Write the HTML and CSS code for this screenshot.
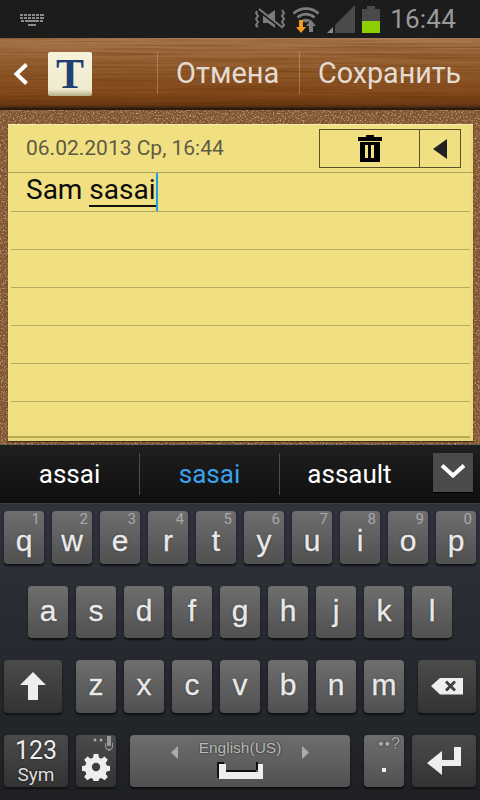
FILE: index.html
```html
<!DOCTYPE html>
<html lang="ru">
<head>
<meta charset="utf-8">
<title>Заметка</title>
<link rel="stylesheet" href="styles.css">
</head>
<body>
<svg class="defs" width="0" height="0" aria-hidden="true">
  <filter id="woodgrain" x="0" y="0" width="100%" height="100%">
    <feTurbulence type="fractalNoise" baseFrequency="0.006 0.45" numOctaves="3" seed="4"/>
    <feColorMatrix values="0 0 0 0 0.1  0 0 0 0 0.03  0 0 0 0 0  0.9 0 0 0 -0.34"/>
  </filter>
  <filter id="corkdark" x="0" y="0" width="100%" height="100%">
    <feTurbulence type="fractalNoise" baseFrequency="0.7" numOctaves="2" seed="9"/>
    <feColorMatrix values="0 0 0 0 0.2  0 0 0 0 0.1  0 0 0 0 0.03  2.2 0 0 0 -1.05"/>
  </filter>
  <filter id="corklight" x="0" y="0" width="100%" height="100%">
    <feTurbulence type="fractalNoise" baseFrequency="0.6" numOctaves="2" seed="21"/>
    <feColorMatrix values="0 0 0 0 0.72  0 0 0 0 0.52  0 0 0 0 0.34  2.2 0 0 0 -1.05"/>
  </filter>
</svg>
<div class="status">
  <svg class="st-kbd" width="26" height="14" viewBox="0 0 26 14"><path fill="#8a8a8a" d="M1 1h3v2H1zM5 1h3v2H5zM9 1h3v2H9zM13 1h3v2h-3zM17 1h3v2h-3zM21 1h4v2h-4zM1 4h3v2H1zM5 4h3v2H5zM9 4h3v2H9zM13 4h3v2h-3zM17 4h3v2h-3zM21 4h4v2h-4zM2 7h3v2H2zM6 7h14v2H6zM21 7h3v2h-3zM9 11h8v2H9z"/></svg>
  <div class="st-right">
    <svg width="32" height="22" viewBox="0 0 32 22"><path fill="#7c7c7c" d="M9 7h5l7-5v18l-7-5H9z"/><path fill="none" stroke="#7c7c7c" stroke-width="2" d="M4 2l-2 3 2 3-2 3 2 3-2 3 2 2M28 2l2 3-2 3 2 3-2 3 2 3-2 2"/><path stroke="#1c1c1c" stroke-width="3" d="M3 1l26 20"/><path stroke="#7c7c7c" stroke-width="2" d="M5 1l24 19"/></svg>
    <svg class="st-wifi" width="28" height="28" viewBox="0 0 28 28"><path fill="none" stroke="#7c7c7c" stroke-width="2.6" d="M1.500 8.500C8.500 2 19.500 2 26.500 8.500M5.500 12.500C10.500 8 17.500 8 22.500 12.500M9.500 16.500C12 14.500 16 14.500 18.500 16.500"/><path fill="#7c7c7c" d="M14 18l2-2h-4zM19 15l5 6h-3v6h-4v-6h-3z"/><path fill="#f39a1d" d="M7 15h4v7h3l-5 6-5-6h3z"/></svg>
    <svg width="28" height="28" viewBox="0 0 28 28"><path fill="#4a4a4a" d="M8 20L28 0v28H8z"/><path fill="#8a8a8a" d="M0 28l6-6v6z"/></svg>
    <svg width="18" height="28" viewBox="0 0 18 28"><path fill="#4a4a4a" d="M5 1h8v3h5v12H0V4h5z"/><path fill="#8ccf00" d="M0 16h18v12H0z"/></svg>
    <span class="clock">16:44</span>
  </div>
</div>
<header class="bar">
  <svg class="tex" width="480" height="72"><rect width="480" height="69" filter="url(#woodgrain)"/></svg>
  <svg class="back" width="16" height="24" viewBox="0 0 16 24"><path fill="none" stroke="#fff" stroke-width="4" d="M13.500 2.500L3.500 12l10 9.500"/></svg>
  <div class="app"><span class="app-t">T</span></div>
  <div class="act act-cancel">Отмена</div>
  <div class="act act-save">Сохранить</div>
</header>
<main class="cork">
  <svg class="tex" width="480" height="335"><rect width="480" height="335" filter="url(#corkdark)"/><rect width="480" height="335" filter="url(#corklight)"/></svg>
  <section class="note">
    <div class="note-head">
      <span class="date">06.02.2013 Ср, 16:44</span>
      <div class="tools">
        <div class="tool tool-del">
          <svg width="24" height="27" viewBox="0 0 24 27"><path d="M8 0h8v2h8v4H0V2h8zM2 7h20v20H2zM7 10v13h3V10zM13 10v13h3V10z" fill="#000" fill-rule="evenodd"/></svg>
        </div>
        <div class="tool tool-arrow"><svg width="14" height="20" viewBox="0 0 14 20"><path fill="#222" d="M14 0v20L0 10z"/></svg></div>
      </div>
    </div>
    <div class="line line-text"><span>Sam <u class="comp">sasai</u></span><i class="caret"></i></div>
    <div class="line"></div>
    <div class="line"></div>
    <div class="line"></div>
    <div class="line"></div>
    <div class="line"></div>
  </section>
</main>
<div class="sugg">
  <div class="sg sg-1">assai</div>
  <div class="sg sg-2 on">sasai</div>
  <div class="sg sg-3">assault</div>
  <div class="more"><svg width="28" height="16" viewBox="0 0 28 16"><path fill="none" stroke="#fff" stroke-width="4" d="M3 2.500l11 10 11-10"/></svg></div>
</div>
<div class="kb">
  <div class="row row-1">
    <div class="key"><sup class="num">1</sup>q</div>
    <div class="key"><sup class="num">2</sup>w</div>
    <div class="key"><sup class="num">3</sup>e</div>
    <div class="key"><sup class="num">4</sup>r</div>
    <div class="key"><sup class="num">5</sup>t</div>
    <div class="key"><sup class="num">6</sup>y</div>
    <div class="key"><sup class="num">7</sup>u</div>
    <div class="key"><sup class="num">8</sup>i</div>
    <div class="key"><sup class="num">9</sup>o</div>
    <div class="key"><sup class="num">0</sup>p</div>
  </div>
  <div class="row row-2">
    <div class="key">a</div><div class="key">s</div><div class="key">d</div><div class="key">f</div><div class="key">g</div><div class="key">h</div><div class="key">j</div><div class="key">k</div><div class="key">l</div>
  </div>
  <div class="row">
    <div class="key dark w58 after14"><svg width="26" height="28" viewBox="0 0 26 28"><path fill="#eee" d="M13 0l13 13h-8v15H8V13H0z"/></svg></div>
    <div class="key">z</div><div class="key">x</div><div class="key">c</div><div class="key">v</div><div class="key">b</div><div class="key">n</div><div class="key">m</div>
    <div class="key dark w58 before6"><svg width="32" height="17" viewBox="0 0 32 17"><path fill="#eee" fill-rule="evenodd" d="M9 0h23v16.500H9L0 8zM14 4.500l3.500 3.500-3.500 3.500 2 2 3.500-3.500 3.500 3.500 2-2-3.500-3.500 3.500-3.500-2-2-3.500 3.500-3.500-3.500z"/></svg></div>
  </div>
  <div class="row">
    <div class="key dark w64 sym"><span class="sym-a">123</span><span class="sym-b">Sym</span></div>
    <div class="key dark settings">
      <svg class="mic" width="20" height="16" viewBox="0 0 20 16"><circle cx="2" cy="4" r="1.500" fill="#aaa"/><circle cx="8" cy="4" r="1.500" fill="#aaa"/><path fill="#999" d="M14 0h4v10h-4zM12 7h1v3a3 3 0 0 0 6 0V7h1v3a4 4 0 0 1-3 4v1h-2v-1a4 4 0 0 1-3-4z"/></svg>
      <svg class="gear" width="28" height="28" viewBox="0 0 28 28"><path fill="#eee" fill-rule="evenodd" d="M11.500 0h5l.7 4 2.600 1.100 3.400-2.300 3.500 3.500-2.300 3.400 1.100 2.600 4 .7v5l-4 .7-1.100 2.600 2.300 3.400-3.500 3.500-3.400-2.300-2.600 1.100-.7 4h-5l-.7-4-2.600-1.100-3.400 2.300-3.500-3.500 2.300-3.400-1.100-2.600-4-.7v-5l4-.7 1.100-2.600-2.300-3.400 3.500-3.500 3.400 2.300 2.600-1.100zM14 9.500a4.500 4.500 0 1 0 0 9 4.500 4.500 0 0 0 0-9z" transform="translate(1 1) scale(.93)"/></svg>
    </div>
    <div class="key space">
      <svg class="arr-l" width="7" height="13" viewBox="0 0 7 13"><path fill="#aaa" d="M7 0v13L0 6.500z"/></svg>
      <span class="lang">English(US)</span>
      <svg class="arr-r" width="7" height="13" viewBox="0 0 7 13"><path fill="#aaa" d="M0 0v13l7-6.500z"/></svg>
      <svg class="spacebar" width="46" height="17" viewBox="0 0 46 17"><path fill="#111" d="M0 0h7v10h32V0h2v8H9V2H2v14H0z"/><path fill="#eee" d="M2 2h7v8h32V2h5v15H2z"/></svg>
    </div>
    <div class="key period"><span class="per-top">&#8226;&#8226;?</span><span class="per-dot"></span></div>
    <div class="key dark w64 enter"><svg width="34" height="29" viewBox="0 0 34 29"><path fill="#eee" d="M27 1h7v19H15v9L0 17 15 5v9h12z"/></svg></div>
  </div>
</div>
</body>
</html>
```
FILE: styles.css
```css
* { box-sizing: border-box; }
html, body { margin: 0; padding: 0; }
body {
  width: 480px;
  height: 800px;
  overflow: hidden;
  font-family: Roboto, "Noto Sans CJK SC", sans-serif;
  background: #1c1c1c;
  display: flex;
  flex-direction: column;
}
.defs { position: absolute; }
.tex { position: absolute; left: 0; top: 0; pointer-events: none; }

.status {
  height: 38px;
  background: #1c1c1c;
  display: flex;
  align-items: center;
  justify-content: space-between;
  padding: 0 24px 0 19px;
}
.st-kbd { margin-top: 1px; }
.st-right { display: flex; align-items: center; gap: 7px; }
.st-right svg { flex: none; }
.st-wifi { margin-left: -1px; }
.clock { font-size: 26px; color: #9a9a9a; margin-left: 3px; letter-spacing: .2px; line-height: 38px; }

.bar {
  position: relative;
  height: 72px;
  background: linear-gradient(#a97a50 0, #a06a40 18%, #8f5829 50%, #84491c 78%, #6b3a16 92%, #4a2a12 96%, #2a1a0e 98%, #2a1a0e 100%);
  display: flex;
  align-items: center;
}
.back { position: relative; margin-left: 13px; flex: none; }
.app {
  position: relative;
  width: 44px;
  height: 44px;
  margin-left: 19px;
  flex: none;
  border-radius: 2px;
  background: linear-gradient(#f7f3da, #f0ebcf 85%, #cdc7a4 94%, #b5ae8c);
  display: flex;
  align-items: center;
  justify-content: center;
}
.app-t {
  font-family: "Liberation Serif", serif;
  font-weight: 700;
  font-size: 42px;
  line-height: 44px;
  color: #1f4072;
}
.act {
  position: relative;
  height: 42px;
  margin-top: -2px;
  display: flex;
  align-items: center;
  font-size: 29px;
  color: #e4dcd2;
  border-left: 1px solid rgba(240, 215, 190, .3);
  flex: none;
}
.act-cancel { margin-left: 65px; width: 142px; padding-left: 18px; }
.act-save { padding-left: 18px; font-size: 28.7px; }

.cork {
  position: relative;
  height: 335px;
  background: #80532f;
  padding: 14px 7px 4px 8px;
  border-bottom: 1px solid #555;
}
.note {
  position: relative;
  height: 317px;
  background: #f0e082;
  border-top: 1px solid #f6ecae;
  border-bottom: 3px solid #e8d87a;
  box-shadow: inset -3px 0 #ebdb7c, inset 0 -2px #b9a950, 0 1px 1px rgba(0, 0, 0, .5);
  display: flex;
  flex-direction: column;
}
.note-head {
  height: 48px;
  padding: 4px 12px 0 18px;
  display: flex;
  justify-content: space-between;
  border-bottom: 1px solid #aea15f;
  margin: 0;
}
.date { font-size: 21px; color: #5e5a44; line-height: 39px; }
.tools {
  width: 142px;
  height: 39px;
  border: 1px solid #5b5230;
  display: flex;
}
.tool { display: flex; align-items: center; justify-content: center; }
.tool-del { width: 100px; border-right: 1px solid #5b5230; }
.tool-arrow { flex: 1; }
.line {
  height: 38px;
  margin: 0 3px;
  border-bottom: 1px solid #b8aa62;
  flex: none;
}
.line-text {
  height: 39px;
  padding-left: 15px;
  font-size: 28px;
  line-height: 34px;
  color: #0c0c0c;
  display: flex;
  align-items: flex-start;
}
.comp { text-decoration: none; border-bottom: 2px solid #111; display: inline-block; line-height: 31px; }
.caret { width: 2px; height: 38px; background: #1e9bea; flex: none; }

.sugg {
  position: relative;
  height: 58px;
  background: linear-gradient(#1f1f1f, #0f0f0f);
  display: flex;
  align-items: center;
}
.sg { height: 42px; display: flex; align-items: center; justify-content: center; font-size: 26px; color: #fff; }
.sg-1 { width: 139px; }
.sg-2 { width: 140px; border-left: 1px solid #4c4c4c; }
.sg-3 { width: 140px; border-left: 1px solid #4c4c4c; }
.on { color: #39a3ec; }
.more {
  width: 40px;
  height: 39px;
  margin: -3px 0 0 14px;
  background: #4a4a4a;
  box-shadow: 0 1px 1px #000;
  display: flex;
  align-items: center;
  justify-content: center;
  padding-bottom: 4px;
}

.kb {
  flex: 1;
  background: linear-gradient(#2e323a, #1e2024);
  border-top: 1px solid #3a3d42;
  padding: 7px 4px 0;
  display: flex;
  flex-direction: column;
  gap: 22px;
}
.row { display: flex; gap: 8px; height: 52.5px; }
.row-2 { padding-left: 24px; }
.key {
  position: relative;
  width: 40px;
  height: 52.5px;
  flex: none;
  border-radius: 4px;
  background: linear-gradient(#6e6e6e, #5f5f5f 50%, #505050);
  box-shadow: 0 1px 0 #111, 0 2px 2px rgba(0, 0, 0, .6);
  font-family: "Liberation Sans", Arial, sans-serif;
  color: #e9e9e9;
  font-size: 30px;
  line-height: 30px;
  -webkit-text-stroke: .4px #e9e9e9;
  text-shadow: 0 0 2px rgba(0, 0, 0, .8);
  display: flex;
  align-items: center;
  justify-content: center;
  padding-bottom: 2px;
}
.row-1 .key { padding: 8px 0 0; }
.num {
  position: absolute;
  right: 4px;
  top: 1px;
  font-family: Roboto, sans-serif;
  font-size: 15px;
  line-height: 15px;
  -webkit-text-stroke: 0;
  text-shadow: none;
  color: #a8a8a8;
}
.dark { background: linear-gradient(#4b4b4b, #333); padding: 0; }
.w58 { width: 58px; }
.w64 { width: 64px; }
.after14 { margin-right: 6px; }
.before6 { margin-left: 6px; }
.sym { flex-direction: column; font-family: Roboto, sans-serif; -webkit-text-stroke: 0; padding: 0; line-height: 1; }
.sym-a { font-size: 25px; color: #eee; }
.sym-b { font-size: 19px; color: #ddd; margin-top: 2px; }
.settings { padding: 0; }
.mic { position: absolute; right: 3px; top: 1px; }
.gear { margin-top: 13px; }
.space { width: 220px; margin-left: 6px; padding: 0; }
.arr-l { position: absolute; left: 41px; top: 11px; }
.arr-r { position: absolute; left: 172px; top: 11px; }
.lang {
  position: absolute;
  left: 0;
  right: 0;
  top: 3px;
  text-align: center;
  font-size: 15.5px;
  line-height: 20px;
  -webkit-text-stroke: 0;
  color: #bbb;
}
.spacebar { position: absolute; left: 87px; top: 27px; }
.period { margin-left: 6px; padding: 0; }
.per-top { position: absolute; right: 3px; top: 1px; font-size: 16px; line-height: 16px; -webkit-text-stroke: 0; color: #aaa; letter-spacing: 1px; }
.per-dot { width: 4px; height: 4px; background: #eee; position: absolute; left: 18px; top: 33px; }
.enter { padding: 0; }
```
